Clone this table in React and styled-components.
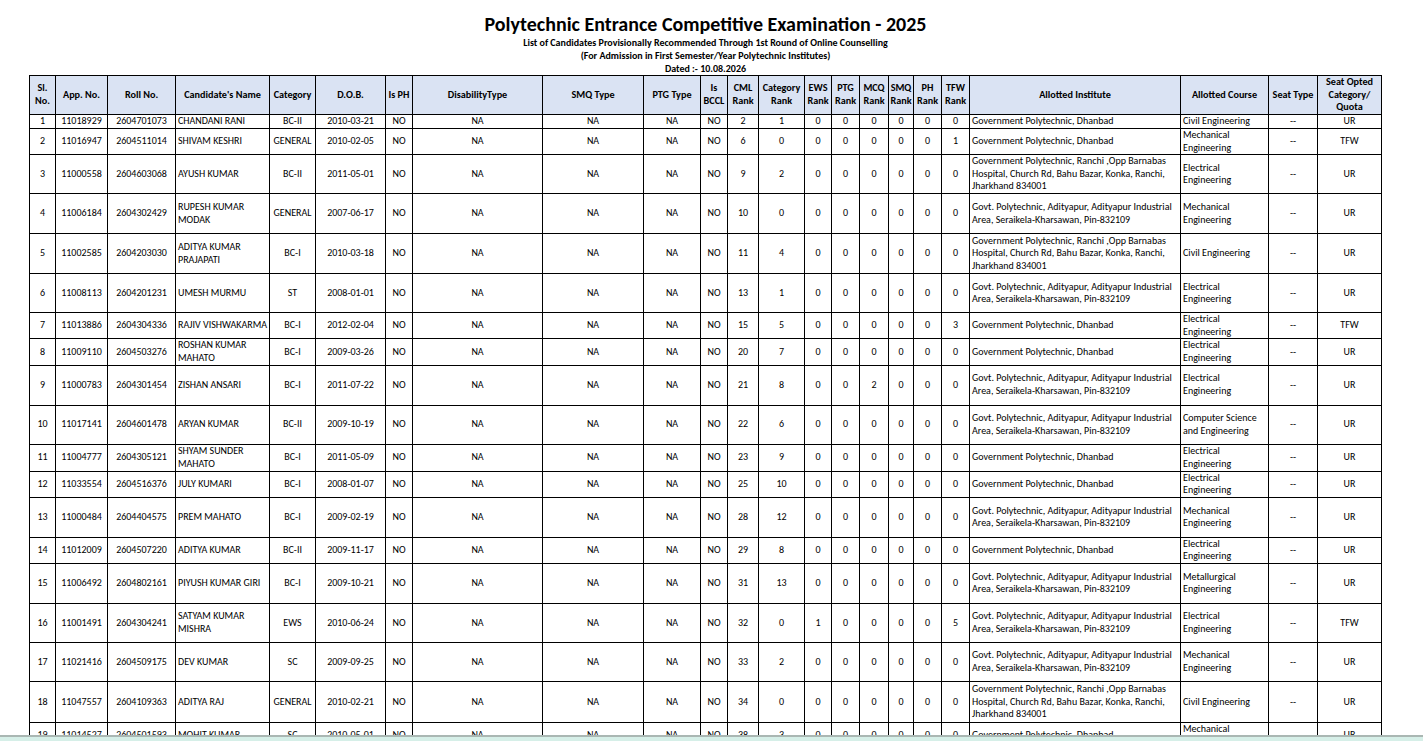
import React from "react";
import styled, { createGlobalStyle } from "styled-components";

const FONT = `Carlito, "Noto Sans", sans-serif`;

const Global = createGlobalStyle`
  html, body { margin: 0; padding: 0; background: #fff; overflow: hidden; }
  body { font-family: ${FONT}; color: #000; }
`;

const Page = styled.div`
  padding: 12px 0 0 29px;
  width: 1353px;
`;

const Heading = styled.header`
  display: flex;
  flex-direction: column;
  align-items: center;
`;

const Title = styled.h1`
  margin: 0;
  font-size: 20px;
  line-height: 24px;
  font-weight: 700;
`;

const SubLine = styled.div`
  font-size: 10px;
  line-height: 13px;
  font-weight: 700;
`;

const Table = styled.table`
  border-collapse: collapse;
  table-layout: fixed;
  width: 1353px;
  font-size: 10px;
  line-height: 12.6px;
`;

const Th = styled.th`
  background: #dae3f3;
  border: 1px solid #000;
  font-weight: 700;
  font-size: 10.2px;
  padding: 0 1px;
  text-align: center;
  vertical-align: middle;
  height: 38px;
`;

const Tr = styled.tr`
  height: ${(p) => p.$h}px;
`;

const Td = styled.td`
  border: 1px solid #000;
  padding: 0 2px;
  text-align: ${(p) => (p.$left ? "left" : "center")};
  vertical-align: middle;
  white-space: pre-line;
  overflow: hidden;
`;

const BottomBar = styled.div`
  position: fixed;
  left: 0;
  right: 0;
  bottom: 0;
  height: 4px;
  background: #d6efe8;
  border-top: 2px solid #aab7b3;
`;

const cols = [26, 52, 68, 94, 46, 70, 27, 130, 101, 57, 27, 31, 46, 27, 28, 29, 25, 28, 28, 211, 88, 49, 64];

const headers = [
  "Sl.\nNo.", "App. No.", "Roll No.", "Candidate's Name", "Category", "D.O.B.", "Is PH",
  "DisabilityType", "SMQ Type", "PTG Type", "Is\nBCCL", "CML\nRank", "Category\nRank",
  "EWS\nRank", "PTG\nRank", "MCQ\nRank", "SMQ\nRank", "PH\nRank", "TFW\nRank",
  "Allotted Institute", "Allotted Course", "Seat Type", "Seat Opted\nCategory/\nQuota",
];

const DHN = "Government Polytechnic, Dhanbad";
const RNC = "Government Polytechnic, Ranchi ,Opp Barnabas\nHospital, Church Rd, Bahu Bazar, Konka, Ranchi,\nJharkhand 834001";
const ADT = "Govt. Polytechnic, Adityapur, Adityapur Industrial\nArea, Seraikela-Kharsawan, Pin-832109";
const CIV = "Civil Engineering";
const MEC = "Mechanical\nEngineering";
const ELE = "Electrical\nEngineering";

// [sl, app, roll, name, cat, dob, cml, catRank, ews, mcq, tfw, inst, course, quota, height]
const rows = [
  [1, "11018929", "2604701073", "CHANDANI RANI", "BC-II", "2010-03-21", 2, 1, 0, 0, 0, DHN, CIV, "UR", 14],
  [2, "11016947", "2604511014", "SHIVAM KESHRI", "GENERAL", "2010-02-05", 6, 0, 0, 0, 1, DHN, MEC, "TFW", 26],
  [3, "11000558", "2604603068", "AYUSH KUMAR", "BC-II", "2011-05-01", 9, 2, 0, 0, 0, RNC, ELE, "UR", 39],
  [4, "11006184", "2604302429", "RUPESH KUMAR\nMODAK", "GENERAL", "2007-06-17", 10, 0, 0, 0, 0, ADT, MEC, "UR", 40],
  [5, "11002585", "2604203030", "ADITYA KUMAR\nPRAJAPATI", "BC-I", "2010-03-18", 11, 4, 0, 0, 0, RNC, CIV, "UR", 40],
  [6, "11008113", "2604201231", "UMESH MURMU", "ST", "2008-01-01", 13, 1, 0, 0, 0, ADT, ELE, "UR", 39],
  [7, "11013886", "2604304336", "RAJIV VISHWAKARMA", "BC-I", "2012-02-04", 15, 5, 0, 0, 3, DHN, ELE, "TFW", 26],
  [8, "11009110", "2604503276", "ROSHAN KUMAR\nMAHATO", "BC-I", "2009-03-26", 20, 7, 0, 0, 0, DHN, ELE, "UR", 26],
  [9, "11000783", "2604301454", "ZISHAN ANSARI", "BC-I", "2011-07-22", 21, 8, 0, 2, 0, ADT, ELE, "UR", 40],
  [10, "11017141", "2604601478", "ARYAN KUMAR", "BC-II", "2009-10-19", 22, 6, 0, 0, 0, ADT, "Computer Science\nand Engineering", "UR", 39],
  [11, "11004777", "2604305121", "SHYAM SUNDER\nMAHATO", "BC-I", "2011-05-09", 23, 9, 0, 0, 0, DHN, ELE, "UR", 27],
  [12, "11033554", "2604516376", "JULY KUMARI", "BC-I", "2008-01-07", 25, 10, 0, 0, 0, DHN, ELE, "UR", 26],
  [13, "11000484", "2604404575", "PREM MAHATO", "BC-I", "2009-02-19", 28, 12, 0, 0, 0, ADT, MEC, "UR", 40],
  [14, "11012009", "2604507220", "ADITYA KUMAR", "BC-II", "2009-11-17", 29, 8, 0, 0, 0, DHN, ELE, "UR", 26],
  [15, "11006492", "2604802161", "PIYUSH KUMAR GIRI", "BC-I", "2009-10-21", 31, 13, 0, 0, 0, ADT, "Metallurgical\nEngineering", "UR", 40],
  [16, "11001491", "2604304241", "SATYAM KUMAR\nMISHRA", "EWS", "2010-06-24", 32, 0, 1, 0, 5, ADT, ELE, "TFW", 39],
  [17, "11021416", "2604509175", "DEV KUMAR", "SC", "2009-09-25", 33, 2, 0, 0, 0, ADT, MEC, "UR", 39],
  [18, "11047557", "2604109363", "ADITYA RAJ", "GENERAL", "2010-02-21", 34, 0, 0, 0, 0, RNC, CIV, "UR", 41],
  [19, "11014527", "2604501593", "MOHIT KUMAR", "SC", "2010-05-01", 38, 3, 0, 0, 0, DHN, MEC, "UR", 26],
];

export default function App() {
  return (
    <>
      <Global />
      <Page>
        <Heading>
          <Title>Polytechnic Entrance Competitive Examination - 2025</Title>
          <SubLine>List of Candidates Provisionally Recommended Through 1st Round of Online Counselling</SubLine>
          <SubLine>(For Admission in First Semester/Year Polytechnic Institutes)</SubLine>
          <SubLine>Dated :- 10.08.2026</SubLine>
        </Heading>
        <Table>
          <colgroup>
            {cols.map((w, i) => (
              <col key={i} style={{ width: w }} />
            ))}
          </colgroup>
          <thead>
            <tr>
              {headers.map((h, i) => (
                <Th key={i}>
                  {h.split("\n").map((l, j) => (
                    <React.Fragment key={j}>
                      {j > 0 && <br />}
                      {l}
                    </React.Fragment>
                  ))}
                </Th>
              ))}
            </tr>
          </thead>
          <tbody>
            {rows.map((r) => {
              const [sl, app, roll, name, cat, dob, cml, catRank, ews, mcq, tfw, inst, course, quota, h] = r;
              return (
                <Tr key={sl} $h={h}>
                  <Td>{sl}</Td>
                  <Td>{app}</Td>
                  <Td>{roll}</Td>
                  <Td $left>{name}</Td>
                  <Td>{cat}</Td>
                  <Td>{dob}</Td>
                  <Td>NO</Td>
                  <Td>NA</Td>
                  <Td>NA</Td>
                  <Td>NA</Td>
                  <Td>NO</Td>
                  <Td>{cml}</Td>
                  <Td>{catRank}</Td>
                  <Td>{ews}</Td>
                  <Td>0</Td>
                  <Td>{mcq}</Td>
                  <Td>0</Td>
                  <Td>0</Td>
                  <Td>{tfw}</Td>
                  <Td $left>{inst}</Td>
                  <Td $left>{course}</Td>
                  <Td>--</Td>
                  <Td>{quota}</Td>
                </Tr>
              );
            })}
          </tbody>
        </Table>
      </Page>
      <BottomBar />
    </>
  );
}
